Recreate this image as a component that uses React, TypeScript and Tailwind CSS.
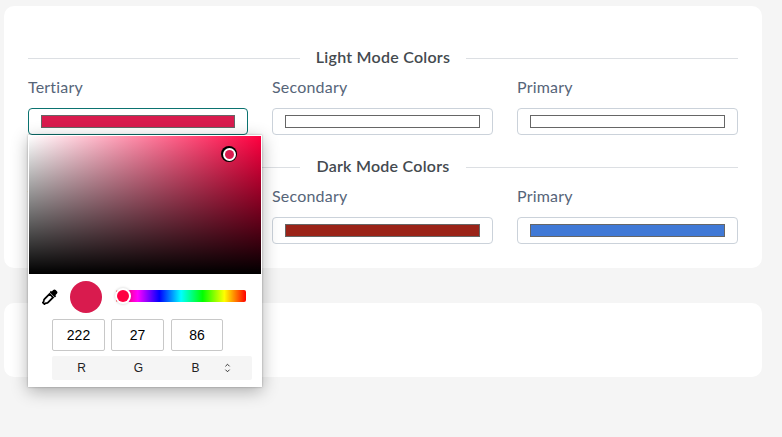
import React from "react";

function Field({ label, color, active, width, children }: { label: string; color: string; active?: boolean; width: string; children?: React.ReactNode }) {
  return (
    <div className={width === "a" ? "relative w-[220px]" : "relative w-[221px]"}>
      <div className="h-[18px] mb-[12px] text-[16px] tracking-[0.2px] leading-[18px] text-[#566579]">{label}</div>
      <div className={active
        ? "h-[27px] rounded-[4px] border border-[#0b7370] px-[12px] py-[6px] bg-white"
        : "h-[27px] rounded-[4px] border border-[#cbd2da] px-[12px] py-[6px] bg-white"}>
        <div className="h-[13px] border border-[#666666]" style={{ backgroundColor: color }} />
      </div>
      {children}
    </div>
  );
}

function Heading({ children }: { children: string }) {
  return (
    <div className="flex items-center gap-4 h-[20px]">
      <div className="flex-1 border-t border-[#dcdfe3]" />
      <div className="text-[16px] tracking-[0.25px] leading-[20px] -mt-[2px] font-semibold text-[#444a4f]">{children}</div>
      <div className="flex-1 border-t border-[#dcdfe3]" />
    </div>
  );
}

function Picker() {
  return (
    <div className="absolute left-0 top-[57px] z-10 w-[234px] h-[252px] bg-white shadow-[0_0_2px_rgba(0,0,0,0.3),0_4px_16px_rgba(0,0,0,0.3)] font-['Liberation_Sans',sans-serif]">
      <div className="relative mx-px mt-px h-[138px] bg-linear-to-r/srgb from-white to-[#ff0040]">
        <div className="absolute inset-0 bg-linear-to-t/srgb from-black to-transparent" />
        <div className="absolute left-[192px] top-[10px] w-4 h-4 rounded-full bg-black flex items-center justify-center">
          <div className="w-[13px] h-[13px] rounded-full bg-white flex items-center justify-center">
            <div className="w-[9px] h-[9px] rounded-full bg-[#d91b4e]" />
          </div>
        </div>
      </div>
      <div className="flex items-center h-[44px] pl-[14px]">
        <svg viewBox="0 0 18 18" className="w-4 h-4 shrink-0 mt-[2px]" aria-hidden="true">
          <path d="M11 2.800 12.600 1.200a2 2 0 0 1 2.800 0l1.300 1.400a2 2 0 0 1 0 2.800L15 7l1 1-1.500 1.500L8.600 3.600 10 2z" fill="#000" />
          <path d="M8.600 5.600 3 11.200c-.6.6-.9 1.300-1 2L1.800 14.400 1 15.200 2.800 17l.8-.8 1.300-.2c.7-.1 1.400-.4 2-1l5.500-5.500z" fill="#fff" stroke="#000" strokeWidth="2" />
        </svg>
        <div className="w-8 h-8 rounded-full bg-[#d91b4e] ml-[12px] shrink-0 mt-[2px]" />
        <div className="relative ml-[14px] w-[130px] h-3 rounded-[2px] bg-[linear-gradient(to_right,#ff0000,#ff00ff,#0000ff,#00ffff,#00ff00,#ffff00,#ff0000)]">
          <div className="absolute left-px top-0 w-3 h-3 rounded-full bg-[#ff0040] shadow-[0_0_0_2px_#fff,0_0_3px_2px_rgba(0,0,0,0.2)]" />
        </div>
      </div>
      <div className="ml-[24px] flex flex-col">
        <div className="flex h-8 mt-[1px]">
          <div className="w-[53px] border border-[#c8c8c8] rounded-[2px] flex items-center justify-center text-[14px] text-black">222</div>
          <div className="w-[53px] ml-[6px] border border-[#c8c8c8] rounded-[2px] flex items-center justify-center text-[14px] text-black">27</div>
          <div className="w-[52px] ml-[7px] border border-[#c8c8c8] rounded-[2px] flex items-center justify-center text-[14px] text-black">86</div>
        </div>
        <div className="mt-[5px] w-[200px] h-6 bg-[#f5f5f5] rounded-[2px] flex items-center text-[12px] text-[#222222] pl-px">
          <span className="w-[57px] text-center">R</span>
          <span className="w-[57px] text-center">G</span>
          <span className="w-[57px] text-center">B</span>
          <svg viewBox="0 0 8 12" className="w-[7px] h-[10px]" aria-hidden="true">
            <path d="M1.500 4 4 1.500 6.500 4M1.500 8 4 10.500 6.500 8" fill="none" stroke="#222" strokeWidth="1.100" />
          </svg>
        </div>
      </div>
    </div>
  );
}

export default function App() {
  return (
    <div className="min-h-screen w-full bg-[#f5f5f5] pt-[6px] pl-[4px] font-['Lato','Noto_Sans',sans-serif] overflow-hidden">
      <div className="w-[758px] h-[262px] bg-white rounded-[10px] px-[24px] pt-[42px]">
        <Heading>Light Mode Colors</Heading>
        <div className="flex gap-[24px] mt-[10px]">
          <Field label="Tertiary" color="#d91b4e" width="a" active><Picker /></Field>
          <Field label="Secondary" color="#ffffff" width="b" />
          <Field label="Primary" color="#ffffff" width="b" />
        </div>
        <div className="mt-[22px]">
          <Heading>Dark Mode Colors</Heading>
        </div>
        <div className="flex gap-[24px] mt-[10px]">
          <Field label="Tertiary" color="#ffffff" width="a" />
          <Field label="Secondary" color="#9a2318" width="b" />
          <Field label="Primary" color="#4079d6" width="b" />
        </div>
      </div>
      <div className="w-[758px] h-[74px] bg-white rounded-[10px] mt-[35px]" />
    </div>
  );
}
